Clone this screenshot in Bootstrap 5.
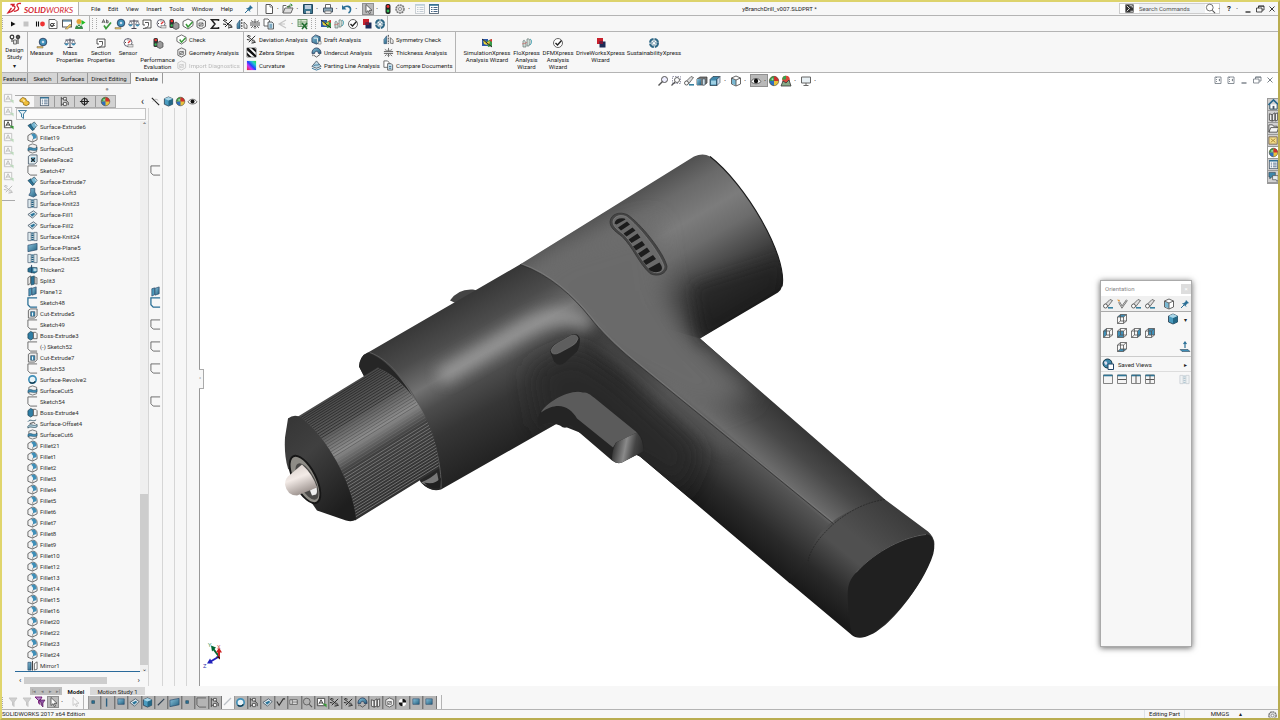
<!DOCTYPE html>
<html lang="en">
<head>
<meta charset="utf-8">
<meta name="viewport" content="width=device-width, initial-scale=1">
<title>yBranchDrill_v007.SLDPRT - SOLIDWORKS</title>
<link href="https://cdn.jsdelivr.net/npm/bootstrap@5.3.0/dist/css/bootstrap.min.css" rel="stylesheet">
<style>
:root{--ui:#f7f7f7;--line:#b4b4b4;--press:#b9b9b9}
body{height:100vh;overflow:hidden;background:var(--ui);border:2px solid #b9ad50;border-top-color:#ddd36c;border-left-color:#e0d56c;font:6px/7px Roboto,"Noto Sans",sans-serif;color:#222}
button,input{font:inherit;color:inherit;background:none;border:0;padding:0;border-radius:0}
a{color:inherit;text-decoration:none}
ul{list-style:none;margin:0;padding:0}
.ico{width:12px;height:12px;display:block;flex:none}
.ico.sm{width:11px;height:11px}
.cell{display:flex;align-items:center;justify-content:center;min-width:0}
.caret-dot{width:6px;flex:none;text-align:center;line-height:8px;font-size:8px}
.faint{opacity:.3}
.gap-s{margin-left:2px}
.vline{width:1px;align-self:stretch;background:var(--line);flex:none}
.grip{width:2px;height:11px;flex:none;background:repeating-linear-gradient(#aaa 0 1px,transparent 1px 2px);background-size:1px 2px;background-repeat:repeat-y}
.titlebar{height:14px;border-bottom:1px solid var(--line)}
.brand-box{width:76px;background:#fff}
.menu{width:164px;padding-left:12px;padding-right:10px}
.quick{width:98px}
.pressed{background:var(--press);box-shadow:inset 0 0 0 1px #909090}
.search{width:101px;height:11px;border:1px solid #ccc;background:#fff}
.search input{width:66px;background:#eff1f3;outline:0;height:9px}
.search input::placeholder{color:#555;opacity:1}
.macros{height:16px;border-bottom:1px solid var(--line)}
.ribbon{height:41px;border-bottom:1px solid var(--line)}
.big{display:flex;flex-direction:column;align-items:center;text-align:center;padding-top:5px;line-height:7px;white-space:nowrap}
.rows{display:flex;flex-direction:column;padding-top:1px}
.rows button{display:flex;align-items:center;height:13px;gap:2px;white-space:nowrap}
.rows .ico{width:11px;height:11px}
.dockpane{width:198px;border-right:1px solid #999;background:var(--ui)}
.tabs-cm{height:11px}
.tabs-cm button{background:#d5d5d5;border-right:1px solid #999;border-bottom:1px solid #aaa;text-align:center;white-space:nowrap}
.tabs-cm button.on{background:var(--ui);border-bottom-color:transparent;color:#000}
.strip{width:13px}
.strip ul{border-bottom:1px solid #aaa;padding:8px 0 4px}
.strip li{height:13px;display:flex;justify-content:center;align-items:center}
.fm-tabs{height:13px}
.fm-tabs .tabset{width:101px;border:1px solid #aaa;border-left:0}
.fm-tabs button{flex:1;border-right:1px solid #999;background:#d2d2d2}
.fm-tabs button.on{background:var(--ui);border-right:0}
.fm-tabs button:last-child{border-right:0}
.filterbox{height:12px;margin:0 2px 1px 1px;border:1px solid #c2c2c2;background:#fbfbfb}
.filterbox input{outline:0;width:80%}
.tree li{height:11px;display:flex;align-items:center;padding-left:12px;gap:2px;white-space:nowrap;color:#333}
.tree{border-bottom:1px solid #2a6a9a}
.vscroll{width:8px;background:#efefef}
.thumb{background:#cdcdcd}
.disp{width:51px}
.disp .cols{display:grid;grid-template-columns:14px 12px 12px 13px}
.disp .cols>*{border-left:1px solid #d6d6d6}
.disp .marks{padding-top:13px}
.disp .marks li{height:11px;display:flex;align-items:center;justify-content:center}
.viewport{background:#fff}
.viewport>.scene{position:absolute;inset:0;width:100%;height:100%}
.hud{position:absolute;top:1px;left:456px;height:13px}
.docctl{position:absolute;top:1px;right:2px;gap:1px}
.taskpane{position:absolute;right:0;top:25px;width:11px;border:1px solid #999;border-right:0}
.taskpane button{display:block;height:12px;width:10px;background:#d0d0d0;border-bottom:1px solid #999}
.taskpane button.on{background:#fff}
.knob{position:absolute;left:-1px;top:296px;width:5px;height:20px;border:1px solid #aaa;border-left:0;background:var(--ui);color:#777;line-height:18px}
.orient{position:absolute;right:86px;top:207px;width:92px;height:367px;background:var(--ui);border:1px solid #aaa;box-shadow:0 1px 6px rgba(0,0,0,.6)}
.orient .head{height:15px;background:#fff;color:#888}
.orient .head button{width:10px;height:10px;background:#ddd;color:#fff;line-height:8px}
.orient .tools{height:16px;background:#f0f0f0;border-bottom:1px solid #aaa}
.orient .faces{display:grid;grid-template-columns:repeat(4,14px) 1fr 12px;grid-auto-rows:14px;align-items:center}
.orient .saved{height:16px;border-top:1px solid #ccc;border-bottom:1px solid #ddd;margin-top:2px;padding-left:1px}
.orient .ports{gap:2px;padding:1px 1px 0}
.bottom{height:24px;border-bottom:1px solid var(--line);border-top:1px solid transparent;background:linear-gradient(var(--line),var(--line)) right -1px/calc(100% - 198px) 1px no-repeat border-box}
.sheets{height:8px;margin-left:14px}
.sheets button{white-space:nowrap}
.sheets .nav-sheet{width:8px;background:#bdbdbd;color:#777;font-size:5px}
.filters{height:14px}
.toggles{display:flex;background:#b4b4b4;height:13px}
.toggles button{flex:1;border-right:1px solid #777;box-shadow:inset 1px 0 #999}
.status{height:8px;line-height:8px;background:var(--ui)}
</style>
</head>
<body class="d-flex flex-column">

<svg width="0" height="0" class="position-absolute" aria-hidden="true">
<defs>
<linearGradient id="gb" x1="0" y1="0" x2="1" y2="1"><stop offset="0" stop-color="#8cc4de"/><stop offset="1" stop-color="#22607f"/></linearGradient>
<linearGradient id="rain" x1="0" y1="1" x2="1" y2="0"><stop offset="0" stop-color="#e22"/><stop offset=".3" stop-color="#c3e"/><stop offset=".5" stop-color="#24f"/><stop offset=".75" stop-color="#2cc"/><stop offset="1" stop-color="#3d3"/></linearGradient>
<symbol id="new" viewBox="0 0 12 12"><path d="M3 1.500h4.500l2 2V10.500H3z" fill="#fff" stroke="#555"/><path d="M7 1.500v2.500h2.500" fill="none" stroke="#555" stroke-width=".7"/></symbol>
<symbol id="open" viewBox="0 0 12 12"><path d="M1 10V2.500h3l1 1h3V5" fill="#fff" stroke="#666"/><path d="M1 10l2-5h8L9 10z" fill="#ddd" stroke="#666"/><path d="M6 5c0-3 2-3 4-3M8.500.800L10.300 2 8.800 3.500" fill="none" stroke="#3a8a3a"/></symbol>
<symbol id="save" viewBox="0 0 12 12"><path d="M1.500 1.500h9v9h-9z" fill="#3d7690" stroke="#23485c"/><path d="M3 2h6v4H3z" fill="#bcd"/><path d="M4 8h4v2.500H4z" fill="#ddd"/></symbol>
<symbol id="print" viewBox="0 0 12 12"><path d="M3.500 5V1.500h5V5" fill="#fff" stroke="#666"/><path d="M1.500 5h9v4h-9z" fill="#8ba6b6" stroke="#456"/><path d="M3 8h6v2.500H3z" fill="#eee" stroke="#666" stroke-width=".7"/></symbol>
<symbol id="undo" viewBox="0 0 12 12"><path d="M2 5C5 2 10 3 9.500 7c0 1.500-1 2.500-2 3" fill="none" stroke="#2a6f96" stroke-width="1.600"/><path d="M1 2v4.500h4.500z" fill="#2a6f96"/></symbol>
<symbol id="cursor" viewBox="0 0 12 12"><path d="M4 1.500v8l2-1.800 1.300 3 1.200-.6-1.300-2.800H10z" fill="#fff" stroke="#444" stroke-width=".8"/></symbol>
<symbol id="light" viewBox="0 0 12 12"><rect x="3.500" y="1" width="5" height="10" rx="2" fill="#222"/><circle cx="6" cy="3.500" r="1.400" fill="#e33"/><circle cx="6" cy="8" r="1.400" fill="#3b5"/></symbol>
<symbol id="gear" viewBox="0 0 12 12"><circle cx="6" cy="6" r="4" fill="#ddd" stroke="#777" stroke-width="1.500" stroke-dasharray="2 .6"/><circle cx="6" cy="6" r="1.500" fill="#fff" stroke="#777" stroke-width=".8"/></symbol>
<symbol id="list" viewBox="0 0 12 12"><rect x="1.500" y="1.500" width="9" height="9" fill="#fff" stroke="#567" stroke-width=".9"/><path d="M1.500 2h9" stroke="#2a6f96" stroke-width="1.500"/><path d="M3 4.500h1.500M3 6.500h1.500M3 8.500h1.500M5.500 4.500h4M5.500 6.500h4M5.500 8.500h4" stroke="#357" stroke-width=".9"/></symbol>
<symbol id="play" viewBox="0 0 12 12"><path d="M4 3.500v5L8.500 6z" fill="#111"/></symbol>
<symbol id="stop" viewBox="0 0 12 12"><path d="M3.500 3.500h5v5h-5z" fill="#c4c4c4"/></symbol>
<symbol id="rec" viewBox="0 0 12 12"><path d="M2.500 3.500v5M4.500 3.500v5" stroke="#111" stroke-width="1.100"/><circle cx="8.500" cy="6" r="2.400" fill="#e33"/></symbol>
<symbol id="script" viewBox="0 0 12 12"><path d="M2 1.500h6l2 2v7H2z" fill="#fff" stroke="#555" stroke-width=".9"/><path d="M4 5.500h4M4 7.500h4" stroke="#777"/><circle cx="5" cy="7" r="1.600" fill="none" stroke="#444"/></symbol>
<symbol id="macro" viewBox="0 0 12 12"><rect x="1.500" y="2" width="9" height="7" fill="#fff" stroke="#555"/><path d="M2 3h8" stroke="#2a6f96"/><path d="M4 11l5-5 1.500 1.500-4 3.500z" fill="#e6c45c" stroke="#765" stroke-width=".5"/></symbol>
<symbol id="run" viewBox="0 0 12 12"><circle cx="5" cy="3.500" r="2.500" fill="#e2a33a"/><path d="M1 11c0-6 8-6 8 0z" fill="#3b8a4a"/><path d="M7.500 2l4 2.500-4 2.500z" fill="#2b2"/><path d="M3 7l2 2 2-2" stroke="#fff" fill="none" stroke-width=".7"/></symbol>
<symbol id="spell" viewBox="0 0 12 12"><path d="M1 5l1.500-3.500L4 5M1.600 4h1.800M5.500 1.500v3.300h1.600v-2H5.500" fill="none" stroke="#444" stroke-width=".8"/><path d="M3 7.500l2 3 5-6" fill="none" stroke="#3a9a3a" stroke-width="1.700"/></symbol>
<symbol id="measure" viewBox="0 0 12 12"><circle cx="7" cy="5" r="3.800" fill="#3f8fb8" stroke="#235" stroke-width=".8"/><circle cx="7" cy="5" r="1.300" fill="#cde"/><path d="M1 9.500h6v1.500H1z" fill="#e6c45c" stroke="#765" stroke-width=".5"/></symbol>
<symbol id="scale" viewBox="0 0 12 12"><path d="M6 1.500v8.500M3.500 10.500h5M1.500 3h9" stroke="#445" fill="none"/><path d="M.500 6.500h4L2.500 3zM7.500 6.500h4L9.500 3z" fill="#fff" stroke="#445" stroke-width=".6"/><path d="M.500 6.500h4c-.5 2.500-3.500 2.500-4 0M7.500 6.500h4c-.5 2.500-3.500 2.500-4 0" fill="#3f8fb8"/></symbol>
<symbol id="section" viewBox="0 0 12 12"><path d="M2 2h8v8H4" fill="#fff" stroke="#444" stroke-width=".9"/><path d="M2 2v5h2M4 4.500h3.500v3C7 9.500 5 10.500 2 10.500" fill="none" stroke="#444" stroke-width=".9"/></symbol>
<symbol id="sensor" viewBox="0 0 12 12"><circle cx="6" cy="5.500" r="4" fill="#fff" stroke="#556" stroke-width=".9"/><path d="M6 6l2.500-2.500" stroke="#d33" stroke-width="1.200"/><path d="M6 2.500v1M3 5.500h1" stroke="#444"/><rect x="6" y="7.500" width="5" height="2.500" fill="#ddd" stroke="#666" stroke-width=".5"/></symbol>
<symbol id="perf" viewBox="0 0 12 12"><rect x="1.500" y="1" width="4.500" height="9" rx="1.500" fill="#333"/><circle cx="3.800" cy="3" r="1.300" fill="#e33"/><circle cx="3.800" cy="7.500" r="1.300" fill="#3b5"/><path d="M5 6l3-2 3 2v4l-3 1.500L5 10z" fill="#999" stroke="#444" stroke-width=".7"/></symbol>
<symbol id="chk" viewBox="0 0 12 12"><path d="M1 3.500L6 1l5 2.500v4L6 11 1 8z" fill="#fff" stroke="#555" stroke-width=".9"/><path d="M4 6l2 3 4.500-5" fill="none" stroke="#3a9a3a" stroke-width="1.500"/></symbol>
<symbol id="geom" viewBox="0 0 12 12"><path d="M2 3l4-2 4.500 2v5.500L6 11 2 9z" fill="#eee" stroke="#555" stroke-width=".9"/><path d="M4 5h4v3H4zM4 8l4-3" fill="none" stroke="#555" stroke-width=".8"/></symbol>
<symbol id="sigma" viewBox="0 0 12 12"><path d="M9.500 3V1.800h-7L6 6l-3.500 4.200h7V9" fill="none" stroke="#222" stroke-width="1.500"/></symbol>
<symbol id="dev" viewBox="0 0 12 12"><path d="M1 2l9 7M2 1.500l3 1M3 9l7-7M6 10l4.500-1M1 6l3 .5" stroke="#222" stroke-width="1"/><circle cx="8" cy="8" r="1.500" fill="none" stroke="#555" stroke-width=".8"/></symbol>
<symbol id="sym" viewBox="0 0 12 12"><path d="M1 10.500V6l3-4v8.500z" fill="url(#gb)" stroke="#246" stroke-width=".6"/><path d="M5.800 1v10" stroke="#333" stroke-dasharray="2 1"/><path d="M8 10V4l3 3v3.500z" fill="#eee" stroke="#555" stroke-width=".8"/></symbol>
<symbol id="thick" viewBox="0 0 12 12"><path d="M1 5h10M1 7h10" stroke="#555" stroke-width="1"/><path d="M6 1v3M6 11V8M4.500 3L6 4.500 7.500 3M4.500 9.500L6 8l1.500 1.500M2 2.500l2 1.500M10 2.500L8 4M2 10l2-2M10 10L8 8" fill="none" stroke="#333" stroke-width=".7"/></symbol>
<symbol id="comp" viewBox="0 0 12 12"><path d="M1 1h4l1.500 1.500V8H1z" fill="#fff" stroke="#444" stroke-width=".8"/><path d="M5 4h4l1.500 1.500V11H5z" fill="#cfe2ec" stroke="#444" stroke-width=".8"/><path d="M6.500 7h2.500M6.500 9h2.500" stroke="#2a6f96"/></symbol>
<symbol id="share" viewBox="0 0 12 12"><path d="M10 2L3 6l7 4M3 6h6" fill="none" stroke="#555" stroke-width="1.200"/></symbol>
<symbol id="xls" viewBox="0 0 12 12"><rect x="1" y="1.500" width="9" height="7" fill="#dfe8d8" stroke="#585" stroke-width=".8"/><path d="M1 4h9M1 6.200h9M4 2v6" stroke="#696" stroke-width=".7"/><path d="M5 5l5 6M10 5l-5 6" stroke="#1d6b2d" stroke-width="1.500"/></symbol>
<symbol id="simx" viewBox="0 0 12 12"><path d="M1 2h6v7H1z" fill="#2a58a8"/><path d="M2 3l3 1 1 4-3-1z" fill="#e6d83c"/><path d="M6 4l5-2v7l-4 1z" fill="#3a9a4a"/><path d="M4 6l5-2-1 4z" fill="#e6c83c"/><path d="M8 3l3-1v3z" fill="#d33"/><path d="M1 2l10 8" stroke="#222"/></symbol>
<symbol id="flox" viewBox="0 0 12 12"><path d="M2 4c2-3 3 3 3 6H2zM6 2c3-1 4 2 2 7H6z" fill="#cfdcd4" stroke="#677" stroke-width=".7"/><path d="M9 2c2 1 2 4 0 6" fill="none" stroke="#39a"/><path d="M1 7c2-1 4 0 5-2" stroke="#c66" fill="none" stroke-width=".7"/></symbol>
<symbol id="dfmx" viewBox="0 0 12 12"><circle cx="6" cy="6" r="4.500" fill="#fff" stroke="#666"/><path d="M3.500 6l2 2 4-4.500" fill="none" stroke="#222" stroke-width="1.400"/></symbol>
<symbol id="drvx" viewBox="0 0 12 12"><path d="M2 1h6v6H2z" fill="#c8202c"/><path d="M4.500 4.500h6v6h-6z" fill="#1c2c58"/><path d="M4.500 4.500H8V7H4.500z" fill="#7a1838"/></symbol>
<symbol id="sust" viewBox="0 0 12 12"><circle cx="6" cy="6" r="4" fill="none" stroke="#2e6785" stroke-width="2" stroke-dasharray="5.300 1"/><path d="M6 3.500l1 2 2 .5-2 1-1 2-1-2-2-1 2-.5z" fill="#fff" stroke="#2e6785" stroke-width=".5"/></symbol>
<symbol id="study" viewBox="0 0 12 12"><circle cx="3" cy="3" r="1.800" fill="none" stroke="#333" stroke-width="1.200"/><circle cx="9" cy="3" r="1.800" fill="#555" stroke="#333"/><path d="M3 5v3M9 5v5" stroke="#333"/><path d="M4.500 6h3v4h-3z" stroke="#555" stroke-width=".8" fill="#ddd"/></symbol>
<symbol id="zebra" viewBox="0 0 12 12"><path d="M1 1h10v10H1z" fill="#fff"/><path d="M1 1h2l8 8v2H9.500L1 3.500zM5.500 1H9l2 2v3zM1 6l5 5H3L1 9z" fill="#111"/><path d="M1 1h10v10H1z" fill="none" stroke="#333" stroke-width=".6"/></symbol>
<symbol id="curv" viewBox="0 0 12 12"><path d="M1 1h10v10H1z" fill="url(#rain)"/></symbol>
<symbol id="draft" viewBox="0 0 12 12"><path d="M1 4l4-3 5 2v6l-4 2-5-2z" fill="url(#gb)" stroke="#235" stroke-width=".8"/><path d="M3 4.500h4v5" stroke="#fff" fill="none"/><path d="M8 8h3v3H8z" fill="#eee" stroke="#555" stroke-width=".5"/></symbol>
<symbol id="under" viewBox="0 0 12 12"><path d="M1 7c0-8 10-8 10 0H8c0-3-4-3-4 0z" fill="url(#gb)" stroke="#235" stroke-width=".8"/><path d="M3 9l3 2 4-3M2 8v2" stroke="#555" fill="none"/></symbol>
<symbol id="partl" viewBox="0 0 12 12"><path d="M1 7l5-6 5 6-5 2z" fill="#bfd8e4" stroke="#345" stroke-width=".8"/><path d="M1 9l5 2 5-2M3 6c2-1 4 0 6-1" fill="none" stroke="#2a6f96"/></symbol>
<symbol id="pin" viewBox="0 0 12 12"><path d="M7 2l3 3-2 .8L6.500 8 4 5.500 6.300 4z" fill="#2a6f96"/><path d="M5 7l-3 3M3.500 5L7 8.500" stroke="#2a6f96"/></symbol>
<symbol id="glass" viewBox="0 0 12 12"><circle cx="5.200" cy="5" r="3.700" fill="none" stroke="#555" stroke-width=".9"/><path d="M8 8l3 3" stroke="#555" stroke-width="1.200"/></symbol>
<symbol id="cmd" viewBox="0 0 12 12"><path d="M1.500 1.500h9v9h-9z" fill="#333"/><path d="M3 3l3 3-3 3M7 9h3M6 3h3v2" stroke="#fff" fill="none" stroke-width=".9"/></symbol>
<symbol id="min" viewBox="0 0 12 12"><path d="M3.500 9h5" stroke="currentColor" stroke-width="1.300"/></symbol>
<symbol id="rest" viewBox="0 0 12 12"><path d="M2.500 5h5.500v4H2.500zM4.500 5V3H10v4H8M4.500 3.200h5.500" fill="none" stroke="currentColor" stroke-width=".8"/></symbol>
<symbol id="x" viewBox="0 0 12 12"><path d="M3.500 3.500l5 5M8.500 3.500l-5 5" stroke="currentColor" stroke-width=".9"/></symbol>
<symbol id="dock" viewBox="0 0 12 12"><path d="M3 3h6v6.500H3z" fill="none" stroke="currentColor" stroke-width=".8"/><path d="M4.500 3v6" stroke="currentColor" stroke-dasharray="1 1" stroke-width=".8"/><path d="M8 4.500L6.500 6 8 7.500z" fill="currentColor"/></symbol>
<symbol id="zfit" viewBox="0 0 12 12"><circle cx="7.500" cy="4.500" r="3" fill="#eef" stroke="#555" stroke-width="1"/><path d="M5.500 6.500L1.500 10.500" stroke="#555" stroke-width="1.500"/></symbol>
<symbol id="zarea" viewBox="0 0 12 12"><path d="M2.500 1.500h8v7h-8z" fill="none" stroke="#99a" stroke-dasharray="1.500 1"/><circle cx="7" cy="5" r="2.500" fill="#fff" stroke="#555" stroke-width=".9"/><path d="M5 7l-3.500 3.500" stroke="#555" stroke-width="1.300"/></symbol>
<symbol id="orig" viewBox="0 0 12 12"><path d="M3 6.500l5-5 2.500 1-5 6.500z" fill="#ddd" stroke="#555" stroke-width=".8"/><path d="M6 9.800h5" stroke="#36809f" stroke-width="1.600"/><circle cx="3.500" cy="8" r="2" fill="#fff" stroke="#555" stroke-width=".9"/></symbol>
<symbol id="orign" viewBox="0 0 12 12"><path d="M3 4l3 5 5-7" fill="none" stroke="#666" stroke-width="2"/><path d="M3 4l3 5 5-7" fill="none" stroke="#ddd" stroke-width=".7"/><path d="M1 1.500l3 .5-1 2z" fill="#e0963a"/></symbol>
<symbol id="secv" viewBox="0 0 12 12"><path d="M1 4l3-2h7v6l-3 2H1z" fill="#777" stroke="#333" stroke-width=".7"/><path d="M1 4h4v6H1z" fill="url(#gb)"/><path d="M6.500 4H9v6H6.500z" fill="#cfe0e8" stroke="#345" stroke-width=".5"/></symbol>
<symbol id="cubev" viewBox="0 0 12 12"><path d="M1 4.500l3-3h7l-3 3v6H1z" fill="#3f88ab" stroke="#234" stroke-width=".7"/><path d="M2 5.500h5v4H2z" fill="#9fd0e4"/><path d="M8 4.500l3-3v6l-3 3z" fill="#cde" stroke="#345" stroke-width=".6"/></symbol>
<symbol id="cube" viewBox="0 0 12 12"><path d="M1.500 3L6 1l4.500 2v6L6 11 1.500 9z" fill="#4a9cc0" stroke="#234" stroke-width=".8"/><path d="M6 5v6l4.500-2V3z" fill="#246886"/><path d="M1.500 3L6 5l4.500-2L6 1z" fill="#a9d6e8"/></symbol>
<symbol id="cubew" viewBox="0 0 12 12"><path d="M1.500 3L6 1l4.500 2v6L6 11 1.500 9z" fill="#fff" stroke="#555" stroke-width=".9"/><path d="M2 3.500l4 1.700v5.300L2 8.800z" fill="#7ab8d2"/><path d="M6 5v6M1.500 3L6 5l4.500-2" fill="none" stroke="#555" stroke-width=".9"/></symbol>
<symbol id="eye" viewBox="0 0 12 12"><path d="M1 6.500c2.500-4 7.500-4 10 0-2.500 3-7.500 3-10 0z" fill="#fff" stroke="#444" stroke-width=".8"/><circle cx="6" cy="6" r="2.200" fill="#111"/></symbol>
<symbol id="ball" viewBox="0 0 12 12"><circle cx="6" cy="6" r="4.700" fill="#e8c23a"/><path d="M6 6V1.300A4.700 4.700 0 0 0 1.300 6z" fill="#3aa04a"/><path d="M6 6V1.300A4.700 4.700 0 0 1 10.700 6z" fill="#d22f2f"/><path d="M6 6H1.300A4.700 4.700 0 0 0 6 10.700z" fill="#2e6fc0"/><circle cx="6" cy="6" r="4.700" fill="none" stroke="#444" stroke-width=".6"/><circle cx="4.500" cy="4.300" r="1" fill="#fff" opacity=".6"/></symbol>
<symbol id="scn" viewBox="0 0 12 12"><circle cx="6" cy="4.500" r="3.800" fill="#d8483a"/><path d="M6 4.500V.700a3.800 3.800 0 0 0-3.800 3.800z" fill="#3aa04a"/><path d="M1 11l2-5 3 2 3-3 2 6z" fill="#8a8" stroke="#333" stroke-width=".8"/></symbol>
<symbol id="mon" viewBox="0 0 12 12"><path d="M1.500 2h9v6h-9z" fill="#e8f0f4" stroke="#666"/><path d="M6 8v2M3.500 10.500h5" stroke="#666"/></symbol>
<symbol id="extr" viewBox="0 0 12 12"><path d="M1 5l5 5.500 2-1.500-4-6z" fill="#2b7499" stroke="#134" stroke-width=".6"/><path d="M4 4l4-3 3 4-3.500 4z" fill="#76b7d3" stroke="#134" stroke-width=".6"/><path d="M8.500 3.500l2 2" stroke="#fff"/></symbol>
<symbol id="fillet" viewBox="0 0 12 12"><path d="M1 4l4.500-2.800C9 1 11 3 11 6v2.500L6 11 1 9z" fill="#f2f2f2" stroke="#555" stroke-width=".9"/><path d="M4.500 3c3-3 6 0 6 3.500L6.500 8C7 5 6 4 4.500 3z" fill="#3f8fb8"/><path d="M6.300 7.500V11" stroke="#666" stroke-width=".7"/></symbol>
<symbol id="scut" viewBox="0 0 12 12"><path d="M2 2.500L6 1l4.500 1.500v7L6 11 2 9.500z" fill="#f0f0f0" stroke="#555" stroke-width=".8"/><path d="M1 6c3-3 6 2 10-1.500v2.800C7 10 4 6 1 8.500z" fill="#3f8fb8" stroke="#134" stroke-width=".5"/></symbol>
<symbol id="delf" viewBox="0 0 12 12"><path d="M1.500 2.500L4 1h7v7.500L8.500 11h-7z" fill="#e4eef2" stroke="#345" stroke-width=".8"/><path d="M4.500 3.500H9v5H4.500z" fill="#5aa0c0"/><path d="M4.500 4.500l4 4M8.500 4.500l-4 4" stroke="#222" stroke-width="1.100"/></symbol>
<symbol id="sk" viewBox="0 0 12 12"><path d="M11 1H1v7.500L3.500 11H11" fill="none" stroke="#555" stroke-width=".9"/></symbol>
<symbol id="skb" viewBox="0 0 12 12"><path d="M11 1H1v7.500L3.500 11H11" fill="none" stroke="#2a6f96" stroke-width="1.400"/></symbol>
<symbol id="loft" viewBox="0 0 12 12"><path d="M4 1.500h4.500v4l2 3.500L7 11 2 9l2-3.500z" fill="url(#gb)" stroke="#246" stroke-width=".7"/></symbol>
<symbol id="knit" viewBox="0 0 12 12"><path d="M1 1.500h3.500v9H1zM7.500 1.500H11v9H7.500z" fill="#dde9ee" stroke="#567" stroke-width=".8"/><path d="M6 1.500v9" stroke="#1d5d80" stroke-width="2.500" stroke-dasharray="1.600 .8"/></symbol>
<symbol id="fill" viewBox="0 0 12 12"><path d="M1 6l6-4 4 3-5 5z" fill="#e3edf1" stroke="#345" stroke-width=".8"/><path d="M3.500 6l4-2 1.500 1.500-3.500 3z" fill="#2b7499"/></symbol>
<symbol id="surfp" viewBox="0 0 12 12"><path d="M1 3.500l10-2v7l-10 2z" fill="url(#gb)" stroke="#246" stroke-width=".7"/></symbol>
<symbol id="thk" viewBox="0 0 12 12"><path d="M1 5l3-1.500 7 .5v4.500L8 10 1 8.500z" fill="#2b7499" stroke="#134" stroke-width=".6"/><path d="M5 1v9" stroke="#246"/><path d="M7 4.500l3.500.5v3L7 8z" fill="#bcd9e5"/></symbol>
<symbol id="split" viewBox="0 0 12 12"><path d="M1 3l3-2v8l-3 2z" fill="#e8e8e8" stroke="#444" stroke-width=".8"/><path d="M4.500 2L8 1v9l-3.500 1z" fill="#2b7499" stroke="#134" stroke-width=".6"/><path d="M8.500 2L11 3v7l-2.500-.5z" fill="#ccc" stroke="#444" stroke-width=".6"/></symbol>
<symbol id="plane" viewBox="0 0 12 12"><path d="M2 3l3-1v7.500l-3 1.500z" fill="#4d9bbd" stroke="#246" stroke-width=".7"/><path d="M5.500 2.500L10 1v7.500L5.500 10z" fill="url(#gb)" stroke="#246" stroke-width=".7"/></symbol>
<symbol id="cute" viewBox="0 0 12 12"><path d="M1.500 2.500L4 1h7v7.500L8.500 11h-7z" fill="#eee" stroke="#555" stroke-width=".9"/><path d="M4 4h4.500v5H4z" fill="#3f8fb8" stroke="#234" stroke-width=".6"/><path d="M6 5v3.500" stroke="#fff"/></symbol>
<symbol id="boss" viewBox="0 0 12 12"><path d="M1 4l3-2.500L7 3v6l-3 2-3-2z" fill="#2f7ea5" stroke="#134" stroke-width=".7"/><path d="M7 2.500h2.500L11 4v5.500H7z" fill="#f2f2f2" stroke="#555" stroke-width=".9"/></symbol>
<symbol id="rev" viewBox="0 0 12 12"><circle cx="6" cy="6" r="4" fill="#e8f3f7" stroke="#3f8fb8" stroke-width="1.800"/><path d="M9 8a4 4 0 0 1-6 1" fill="none" stroke="#134" stroke-width="1.500"/></symbol>
<symbol id="offs" viewBox="0 0 12 12"><path d="M1 4c3-4 5 1 9-2M1 9c3-4 6 1 10-2v2.500C7 12 4 8 1 11z" fill="#bcd9e5" stroke="#356" stroke-width=".9"/><path d="M3 6l4-1 2 1" stroke="#333" fill="none"/></symbol>
<symbol id="mirr" viewBox="0 0 12 12"><path d="M1 2.500h3.500V11H1z" fill="url(#gb)" stroke="#246" stroke-width=".7"/><path d="M6 1v10.500" stroke="#333"/><path d="M8 4l3-2v8l-3 1z" fill="#fff" stroke="#555" stroke-width=".9"/></symbol>
<symbol id="part" viewBox="0 0 12 12"><path d="M1 4l3-2.500L7.500 3 8 5l3 1.500V9L8 10.500l-3-1L4.500 7 1 6z" fill="#f0bf3a" stroke="#7d5c10" stroke-width=".8"/><path d="M4 4l2 1-1 1.500" stroke="#fff" fill="none" stroke-width=".8"/></symbol>
<symbol id="conf" viewBox="0 0 12 12"><path d="M2.500 1v10M2.500 3H5M2.500 9H5" stroke="#444" fill="none"/><path d="M5 1.500h3v3H5zM5 7h3v3.500H5z" fill="#fff" stroke="#444" stroke-width=".9"/><path d="M7 4l3 3v3" stroke="#333" fill="none"/></symbol>
<symbol id="targ" viewBox="0 0 12 12"><circle cx="6" cy="6" r="3.200" fill="none" stroke="#222" stroke-width="1.100"/><path d="M6 1.500v9M1 6h10" stroke="#222" stroke-width="1.100"/></symbol>
<symbol id="funnel" viewBox="0 0 12 12"><path d="M1.500 2.500h8L6.500 6v4.500L4.500 9V6z" fill="#e8f2f6" stroke="#2a6f96" stroke-width=".9"/></symbol>
<symbol id="fun2" viewBox="0 0 12 12"><path d="M2 2h8L7 6v4.500L5.500 9V6z" fill="#777" stroke="#555"/></symbol>
<symbol id="fun3" viewBox="0 0 12 12"><path d="M1 1h7L6 4.500v4L4.500 7V4.500z" fill="#b68ac8" stroke="#606" stroke-width=".8"/><path d="M5 4h6L9 7v4L7.500 9.500V7z" fill="#8f55a8" stroke="#404" stroke-width=".6"/></symbol>
<symbol id="note" viewBox="0 0 12 12"><path d="M1.500 1.500h8v8h-8z" fill="#fff" stroke="#444"/><path d="M3 8l2.500-5L8 8M4 6.500h3" fill="none" stroke="#333"/><path d="M7 7l4.500 4.500v-4z" fill="#3a9a3a"/></symbol>
<symbol id="home" viewBox="0 0 12 12"><path d="M2 6v5h8V6" fill="#fff" stroke="#245"/><path d="M.500 6.500L6 1l5.500 5.500" fill="none" stroke="#24658a" stroke-width="1.700"/><path d="M5 7.500h2V11H5z" fill="#456"/></symbol>
<symbol id="books" viewBox="0 0 12 12"><path d="M1.500 3l3 1v7l-3-1zM4.500 4l3-2v8l-3 1zM8 3l2.500-1v8L8 11z" fill="#eee" stroke="#444" stroke-width=".9"/></symbol>
<symbol id="fold" viewBox="0 0 12 12"><path d="M1 10V2h4l1 1.500h4V5M1 10l2-5h8.500L10 10z" fill="#f4f4f4" stroke="#444" stroke-width=".9"/></symbol>
<symbol id="pal" viewBox="0 0 12 12"><path d="M1 2h9v8H1z" fill="#f3dc8a" stroke="#765"/><path d="M3 4l5 4M8 4L3 8" stroke="#a83"/></symbol>
<symbol id="chat" viewBox="0 0 12 12"><path d="M1 1.500h7v5H4L2 8.500v-2H1z" fill="#3f88ab" stroke="#234" stroke-width=".6"/><path d="M5 5h6v4.500l-1 2-1-2H5z" fill="#e8eef2" stroke="#444" stroke-width=".7"/></symbol>
<symbol id="wire" viewBox="0 0 12 12"><path d="M1.500 4h6v6.500h-6zM4.500 1.500h6V8h-6zM1.500 4l3-2.500M7.500 4l3-2.500M1.500 10.500l3-2.500M7.500 10.500l3-2.500" fill="none" stroke="#555" stroke-width=".8"/></symbol>
<symbol id="pt" viewBox="0 0 12 12"><path d="M3 4h3v3H3z" fill="#2b7499" stroke="#134" stroke-width=".5"/></symbol>
<symbol id="ln" viewBox="0 0 12 12"><path d="M2 9l7-7" stroke="#345" stroke-width="1.200"/></symbol>
<symbol id="hid" viewBox="0 0 12 12"><path d="M2 2l8 8" stroke="#222" stroke-width="1.200"/><path d="M3 6c2-3 4-3 6-1" stroke="#aaa" fill="none"/></symbol>
<symbol id="vl" viewBox="0 0 12 12"><path d="M5 1.500v9" stroke="#2b5f80" stroke-width="1.500"/></symbol>
<symbol id="sf" viewBox="0 0 12 12"><path d="M2 2h7v6H2z" fill="url(#gb)" stroke="#246" stroke-width=".6"/></symbol>
<symbol id="ck" viewBox="0 0 12 12"><path d="M2 5l2.500 4L9 2h2" fill="none" stroke="#333" stroke-width="1.200"/></symbol>
<symbol id="dt" viewBox="0 0 12 12"><circle cx="6" cy="6" r="4" fill="#fff"/><path d="M6 6V2a4 4 0 0 1 4 4zM6 6v4a4 4 0 0 1-4-4z" fill="#111"/></symbol>
<symbol id="box" viewBox="0 0 12 12"><path d="M1 3h8v5H1z" fill="#eee" stroke="#444" stroke-width=".8"/><path d="M3.500 3v5M3.500 5.500H9" stroke="#444" stroke-width=".8"/></symbol>
<symbol id="norm" viewBox="0 0 12 12"><path d="M6 1v6M4.500 3L6 1l1.500 2" stroke="#2a6f96" fill="none" stroke-width="1.200"/><path d="M1 8.500h8l2 2H3z" fill="#3f8fb8" stroke="#234" stroke-width=".5"/></symbol>
<symbol id="world" viewBox="0 0 12 12"><circle cx="5.500" cy="5.500" r="4.500" fill="#3f88ab" stroke="#134"/><path d="M2 4c2-2 4 0 3 2S3 7 2 4z" fill="#dde"/><path d="M6 6h5.500v5.500H6z" fill="#fff" stroke="#246"/></symbol>
<symbol id="v1" viewBox="0 0 12 12"><path d="M1.500 2h9v8.500h-9z" fill="#f4f4f4" stroke="#666" stroke-width=".8"/><path d="M1.500 2.500h9" stroke="#2e7596" stroke-width="1.600"/></symbol>
</defs>
</svg>

<header class="titlebar d-flex align-items-center">
  <div class="brand-box d-flex align-self-stretch">
    <svg viewBox="0 0 76 13" width="76" height="13" role="img" aria-label="SOLIDWORKS">
      <path d="M8.500 2.500h3.500l-.7 1.200M10 4c3-.5 4 1 2 3.500S7.500 10.500 6 10.800L9.500 6M19 1.500c-3-.5-5 1-3.500 2.800s2 3.500-1.500 4.700c-1.500.5-2 0-2 0" fill="none" stroke="#d3222c" stroke-width="1.300"/>
      <text x="22" y="11" font-family="Lato" font-size="8" font-style="italic" fill="#d3222c"><tspan font-weight="bold">SOLID</tspan>WORKS</text>
    </svg>
  </div>
  <div class="vline"></div>
  <nav class="menu d-flex justify-content-between" aria-label="Main menu"><a href="#">File</a><a href="#">Edit</a><a href="#">View</a><a href="#">Insert</a><a href="#">Tools</a><a href="#">Window</a><a href="#">Help</a></nav>
  <button aria-label="Pin menu"><svg class="ico"><use href="#pin"/></svg></button>
  <div class="vline gap-s"></div>
  <div class="quick d-flex ms-1 align-items-center" id="quick"></div>
  <button class="pressed gap-s" aria-label="Select"><svg class="ico"><use href="#cursor"/></svg></button><span class="caret-dot">·</span>
  <div class="d-flex align-items-center gap-s" id="quick2"></div>
  <div class="flex-fill text-center">yBranchDrill_v007.SLDPRT *</div>
  <div class="search d-flex align-items-center"><svg class="ico sm mx-1"><use href="#cmd"/></svg><input type="text" placeholder="Search Commands" aria-label="Search Commands"><svg class="ico sm"><use href="#glass"/></svg><span class="caret-dot">·</span></div>
  <div class="d-flex align-items-center ms-1" id="winctl"></div>
</header>

<div class="macros d-flex align-items-center" id="macros"></div>

<div class="ribbon d-flex" id="ribbon"></div>

<main class="d-flex flex-fill" style="min-height:0">
  <aside class="dockpane d-flex flex-column flex-shrink-0">
    <div class="tabs-cm d-flex" role="tablist">
      <button role="tab" style="width:26px">Features</button><button role="tab" style="width:30px">Sketch</button><button role="tab" style="width:30px">Surfaces</button><button role="tab" style="width:43px">Direct Editing</button><button role="tab" class="on" style="width:32px">Evaluate</button>
    </div>
    <div class="d-flex flex-fill" style="min-height:0">
      <div class="strip"><ul id="strip"></ul></div>
      <div class="flex-fill d-flex flex-column position-relative">
        <div class="text-center" style="height:11px;line-height:10px;color:#999">●</div>
        <div class="d-flex flex-fill" style="min-height:0">
          <div class="d-flex flex-column flex-fill" style="min-width:0">
            <div class="fm-tabs d-flex justify-content-between align-items-center"><div class="tabset d-flex align-self-stretch" id="fmtabs"></div><span class="pe-1" style="font-size:10px">‹</span></div>
            <div class="filterbox d-flex align-items-center"><label for="flt" aria-label="Filter tree"><svg class="ico"><use href="#funnel"/></svg></label><input id="flt" type="text"></div>
            <div class="d-flex">
              <ul class="tree flex-fill" id="tree"></ul>
              <div class="vscroll d-flex flex-column text-center"><span>⌃</span><div class="flex-fill"></div><div class="thumb" style="height:31%"></div><span>⌄</span></div>
            </div>
            <div class="d-flex align-items-center justify-content-between ps-1 mt-1 pe-2" style="height:8px;gap:3px"><span style="font-size:8px">‹</span><div class="thumb" style="width:68%;height:7px"></div><div class="flex-fill"></div><span style="font-size:8px">›</span></div>
          </div>
          <div class="disp d-flex flex-column">
            <div class="cols" style="height:13px" id="dhead"></div>
            <div class="cols flex-fill"><ul class="marks" id="marks"></ul><i></i><i></i><i></i></div>
          </div>
        </div>
      </div>
    </div>
  </aside>

  <section class="viewport flex-fill position-relative" aria-label="Graphics area">
    <svg class="scene" viewBox="200 73 1078 612" role="img" aria-label="Drill model">
      <defs>
        <linearGradient id="front" gradientUnits="userSpaceOnUse" x1="440" y1="311" x2="515" y2="445"><stop offset="0" stop-color="#383838"/><stop offset=".2" stop-color="#4c4c4c"/><stop offset=".38" stop-color="#727272"/><stop offset=".52" stop-color="#4c4c4c"/><stop offset=".7" stop-color="#363636"/><stop offset="1" stop-color="#232323"/></linearGradient>
        <linearGradient id="rear" gradientUnits="userSpaceOnUse" x1="660" y1="176" x2="737" y2="310"><stop offset="0" stop-color="#515151"/><stop offset=".15" stop-color="#6a6a6a"/><stop offset=".34" stop-color="#7c7c7c"/><stop offset=".5" stop-color="#6c6c6c"/><stop offset=".75" stop-color="#3d3d3d"/><stop offset="1" stop-color="#1b1b1b"/></linearGradient>
        <linearGradient id="hand" gradientUnits="userSpaceOnUse" x1="790" y1="413" x2="706" y2="512"><stop offset="0" stop-color="#343434"/><stop offset=".2" stop-color="#484848"/><stop offset=".42" stop-color="#6c6c6c"/><stop offset=".46" stop-color="#555"/><stop offset=".8" stop-color="#2a2a2a"/><stop offset="1" stop-color="#191919"/></linearGradient>
        <linearGradient id="fade" gradientUnits="userSpaceOnUse" x1="600" y1="350" x2="662" y2="400"><stop offset="0" stop-color="#000"/><stop offset="1" stop-color="#fff"/></linearGradient>
        <mask id="join" maskUnits="userSpaceOnUse" x="200" y="73" width="1078" height="612"><path d="M200 73h1078v612H200z" fill="url(#fade)"/></mask>
        <linearGradient id="capg" gradientUnits="userSpaceOnUse" x1="908" y1="513" x2="828" y2="612"><stop offset="0" stop-color="#3a3a3a"/><stop offset=".4" stop-color="#505050"/><stop offset=".55" stop-color="#505050"/><stop offset=".8" stop-color="#2a2a2a"/><stop offset="1" stop-color="#191919"/></linearGradient>
        <linearGradient id="chuck" gradientUnits="userSpaceOnUse" x1="333" y1="392" x2="397" y2="496"><stop offset="0" stop-color="#484848"/><stop offset=".25" stop-color="#5a5a5a"/><stop offset=".44" stop-color="#8c8c8c"/><stop offset=".6" stop-color="#404040"/><stop offset="1" stop-color="#303030"/></linearGradient>
        <linearGradient id="cone" x1="0" y1="0" x2=".6" y2="1"><stop offset="0" stop-color="#353535"/><stop offset=".4" stop-color="#404040"/><stop offset="1" stop-color="#1e1e1e"/></linearGradient>
        <linearGradient id="bit" x1=".3" y1="0" x2=".7" y2="1"><stop offset="0" stop-color="#d8cfca"/><stop offset=".4" stop-color="#f3ebe7"/><stop offset="1" stop-color="#8c827e"/></linearGradient>
        <linearGradient id="trg" gradientUnits="userSpaceOnUse" x1="613" y1="446" x2="643" y2="452"><stop offset="0" stop-color="#333"/><stop offset=".4" stop-color="#8a8a8a"/><stop offset=".7" stop-color="#444"/><stop offset="1" stop-color="#2c2c2c"/></linearGradient>
        <filter id="soft" filterUnits="userSpaceOnUse" x="200" y="73" width="1078" height="612"><feGaussianBlur stdDeviation="12"/></filter>
        <filter id="soft2" filterUnits="userSpaceOnUse" x="200" y="73" width="1078" height="612"><feGaussianBlur stdDeviation="7"/></filter>
        <clipPath id="cf"><path d="M373 352L520 264C550 274 574 297 590 317C600 330 616 346 633 360L833 523Q812 545 808 561L790 583 640 456 612 438 557 423 441 489C442 440 405 375 373 352z"/></clipPath>
        <clipPath id="cr"><path d="M520 264L695 156C730 152 790 260 781 286L700 338 885 499Q857 505 833 524L633 360C616 346 600 330 590 317C574 297 550 274 520 264z"/></clipPath>
      </defs>
      <path d="M450 300Q458 288 473 289l8 2-20 14z" fill="#444"/>
      <path d="M520 264L694 156Q703 152 710 156C745 183 788 255 782 286Q781 290 778 292L700 338 750 382 720 434 600 350 540 320z" fill="url(#rear)"/>
      <path d="M359 366Q360 355 368 352L520 264C550 274 574 297 590 317C600 330 616 346 633 360L710 422 690 498 640 456 557 423 441 489Q430 492 421 482z" fill="url(#front)"/>
      <path d="M582 308L640 320 700 338 885 499 808 561 790 583 640 456 600 430 545 395z" fill="url(#hand)" mask="url(#join)"/>
      <g clip-path="url(#cr)"><path d="M560 250l95-30 10 70 30 48 60 55-60 20-90-50-90-80z" fill="#6b6b6b" filter="url(#soft)"/><path d="M692 285l95-30-5 40-80 48z" fill="#222" opacity=".6" filter="url(#soft2)"/></g>
      <g clip-path="url(#cf)"><path d="M530 368L575 348 620 378 700 450 680 495 640 465 540 425z" fill="#292929" opacity=".9" filter="url(#soft)"/><path d="M440 377L520 330Q562 305 590 325" stroke="#a6a6a6" stroke-width="15" fill="none" opacity=".75" filter="url(#soft2)"/><path d="M600 338L640 374 730 448" fill="none" stroke="#5c5c5c" stroke-width="12" opacity=".6" filter="url(#soft2)"/></g>
      <path d="M885 499L928 531Q936 538 934 547C930 575 885 640 858 637Q854 637 850 633L788 581 808 560Q815 515 885 499z" fill="url(#capg)"/>
      <path d="M932 537Q937 546 931 560C917 595 880 635 860 637Q852 637 850 625C847 590 845 583 858 570C876 550 905 536 923 534Q929 533 932 537z" fill="#202020"/>
      <path d="M856 572C876 550 905 536 926 534" fill="none" stroke="#5c5c5c"/>
      <path d="M520 264C550 274 574 297 590 317C600 330 616 346 633 360L833 523" fill="none" stroke="#2a2a2a" stroke-width=".7"/>
      <path d="M521 263C551 273 575 296 591 316C601 329 617 345 634 359L834 522" fill="none" stroke="#888" stroke-width=".5"/>
      <path d="M885 499Q857 503 833 524Q811 544 808 561" fill="none" stroke="#222" stroke-width=".7" stroke-dasharray="2 1"/>
      <path d="M710 156C745 183 788 255 782 286" fill="none" stroke="#1c1c1c" stroke-width="1.200"/>
      <path d="M359 366Q360 355 368 352C405 365 442 440 442 488Q431 492 421 482L378 367 365 378z" fill="#262626"/>
      <path d="M370 352C407 365 443 440 441 488" fill="none" stroke="#5a5a5a" stroke-width="1"/>
      <path d="M421 482q10-4 16-10l2 10q-8 6-18 0z" fill="#777"/><path d="M424 482q8 8 16 5l1-10q-6 8-17 5z" fill="#1f1f1f"/>
      <path d="M288 418L298 416 378 367C410 381 438 425 439 468L355 520 336 500z" fill="url(#chuck)"/>
      <g id="ribs" stroke-width=".9"></g>
      <path d="M288 418Q293 414 299 416C324 432 352 480 356 519Q352 522 346 520L317 510 288 468Q284 455 285 437z" fill="url(#cone)"/>
      <ellipse cx="305" cy="479" rx="12" ry="27" transform="rotate(-27 305 479)" fill="#161616"/>
      <ellipse cx="305" cy="479" rx="10" ry="25" transform="rotate(-27 305 479)" fill="#8e8c86"/>
      <ellipse cx="307" cy="481" rx="8" ry="20" transform="rotate(-27 307 481)" fill="#4b4a48"/>
      <path d="M310 490l6-5q2 6 0 9l-4 1z" fill="#eee"/>
      <path d="M285 484Q285 479 288 476L302 464Q313 474 317 487L297 495Q287 495 285 484z" fill="url(#bit)"/>
      <path d="M610 221C611 213 620 211 627 214C640 222 664 252 667 266C667 273 658 277 650 273C638 262 634 248 622 236C614 230 610 227 610 221z" fill="#454545" stroke="#333" stroke-width=".8"/>
      <path d="M613 221C614 215 621 214 626 216C639 225 661 254 664 266C664 271 658 274 652 271C641 261 636 247 624 234C617 229 613 226 613 221z" fill="#6a6a6a" stroke="#888" stroke-width=".6"/>
      <path d="M614.500 223q1-6 10-5l1 1-9 5zM618 227l9-6 3 3-9 6zM623.500 233l9-6 3 3-9 6zM628.500 239l9-6 3 4-9 5.500zM633 246l9-5.500 3 4-9 5.500zM638 253l9-6 3 4-9 6zM643 260.500l10-6 3 4-10 6zM648.500 268l11-6q5 7 0 9-5 2-9.500-1z" fill="#1c1c1c"/>
      <path d="M550 351Q551 346 556 343L570 335Q577 331 580 338 580 346 577 351L565 362Q559 367 554 361z" fill="#252525"/>
      <path d="M551 350Q552 346 557 343L571 335Q577 333 578 338 577 343 571 346L560 352Q552 356 551 350z" fill="#5e5e5e" stroke="#7c7c7c" stroke-width=".5"/>
      <path d="M539 426C534 415 545 403 563 395 575 389 586 390 594 397L638 433Q645 440 643 451L622 462Q617 464 612 460L570 424Q566 430 560 425L554 423Q548 420 539 426z" fill="#242424"/>
      <path d="M541 412C546 402 570 388 583 392 588 392 590 394 594 397L637 432 616 442 613 447 577 418C570 406 558 400 541 412z" fill="#5b5b5b"/>
      <path d="M616 442L637 432Q644 440 643 451L622 462Q616 464 612 459 612 450 616 442z" fill="url(#trg)"/>
      <g stroke-width="2" fill="none"><path d="M219 656L213 648" stroke="#063"/><path d="M219 656v-7" stroke="#c22"/><path d="M219 656l-10 6" stroke="#22b"/></g>
      <path d="M211 645l5 2-4 4z" fill="#063"/><path d="M216 652l3-5 3 5z" fill="#c22"/><path d="M207 663l3-5 3 5z" fill="#22b"/><path d="M216 656h4v3z" fill="#410"/>
      <g font-family="Noto Sans" font-size="6"><text x="208" y="646" fill="#396">Y</text><text x="217" y="648" fill="#c55">X</text><text x="203" y="667" fill="#33a">Z</text></g>
    </svg>
    <div class="knob">°</div>
    <div class="hud d-flex align-items-center" id="hud"></div>
    <div class="docctl d-flex text-secondary" id="docctl"></div>
    <div class="taskpane" id="task"></div>

    <div class="orient" role="dialog" aria-label="Orientation">
      <div class="head d-flex align-items-center justify-content-between ps-1"><span>Orientation</span><button aria-label="Close">×</button></div>
      <div class="tools d-flex align-items-center" id="otools"></div>
      <div class="faces" id="faces"></div>
      <div class="saved d-flex align-items-center"><svg class="ico me-1"><use href="#world"/></svg><span class="flex-fill">Saved Views</span><span class="pe-1">▸</span></div>
      <div class="ports d-flex align-items-center" id="vports"></div>
    </div>
  </section>
</main>

<footer>
  <div class="bottom">
    <div class="sheets d-flex">
      <div style="width:14px"></div><button class="nav-sheet">|◂</button><button class="nav-sheet">◂</button><button class="nav-sheet">▸</button><button class="nav-sheet">▸|</button>
      <button class="fw-bold" style="width:28px">Model</button><button style="width:55px;background:#d8d8d8">Motion Study 1</button>
    </div>
    <div class="filters d-flex align-items-center" id="filters"></div>
  </div>
  <div class="status d-flex"><span class="flex-fill">SOLIDWORKS 2017 x64 Edition</span><span class="border-start border-end px-1">Editing Part</span><span class="text-end" style="width:44px">MMGS</span><span class="text-center" style="width:22px">▴</span><span style="width:16px"></span><svg class="ico sm"><use href="#gear"/></svg></div>
</footer>

<script src="https://cdn.jsdelivr.net/npm/bootstrap@5.3.0/dist/js/bootstrap.bundle.min.js"></script>
<script>
const $ = id => document.getElementById(id);
const ico = (n, c = '') => `<svg class="ico ${c}" aria-hidden="true"><use href="#${n}"/></svg>`;
const btn = (n, c = '', i = '') => `<button class="cell ${c}" aria-label="${n}">${ico(n, i)}</button>`;
const dot = '<span class="caret-dot">·</span>';
const gap = '<span class="gap-s"></span>';
const grip = '<span class="grip gap-s"></span>';
const group = (names, w) => `<div class="d-flex" style="width:${w}px">${names.split(' ').map(n => n[0] === '-' ? btn(n.slice(1), 'flex-fill faint') : btn(n, 'flex-fill')).join('')}</div>`;

$('quick').innerHTML = ['new', 'open', 'save', 'print', 'undo'].map(n => `<div class="cell flex-fill">${btn(n)}${dot}</div>`).join('');
$('quick2').innerHTML = btn('light') + btn('gear') + dot + btn('list', 'faint gap-s') + btn('list', 'gap-s');
$('winctl').innerHTML = `<button class="cell fw-bold" style="width:10px;font-size:8px">?</button>${dot}${gap}${btn('min')}${btn('rest')}${btn('x')}`;

$('macros').innerHTML = '<span class="grip"></span>' + gap + group('play stop rec script macro run', 81)
  + '<div class="vline gap-s"></div>' + grip + grip + gap
  + group('spell measure scale section sensor perf chk geom sigma dev sym thick comp -share', 189) + dot + gap + btn('xls')
  + grip + grip + gap + group('simx flox dfmx drvx sust', 68) + '<div class="vline"></div>';

const big = (i, t, w) => `<button class="big" style="width:${w}px">${ico(i)}<span>${t}</span></button>`;
const rows = (list, w) => `<div class="rows" style="width:${w}px">${list.map(r => `<button class="${r[2] || ''}">${ico(r[0])}${r[1]}</button>`).join('')}</div>`;
$('ribbon').innerHTML =
  `<button class="big" style="width:25px;padding-top:2px">${ico('study')}<span>Design<br>Study</span><span style="line-height:12px">▾</span></button><div class="vline"></div>`
  + big('measure', 'Measure', 27) + big('scale', 'Mass<br>Properties', 30) + big('section', 'Section<br>Properties', 32) + big('sensor', 'Sensor', 22)
  + big('perf', '<br>Performance<br>Evaluation', 37)
  + rows([['chk', 'Check'], ['geom', 'Geometry Analysis'], ['geom', 'Import Diagnostics', 'faint']], 67) + '<div class="vline"></div><span style="width:2px"></span>'
  + rows([['dev', 'Deviation Analysis'], ['zebra', 'Zebra Stripes'], ['curv', 'Curvature']], 65)
  + rows([['draft', 'Draft Analysis'], ['under', 'Undercut Analysis'], ['partl', 'Parting Line Analysis']], 72)
  + rows([['sym', 'Symmetry Check'], ['thick', 'Thickness Analysis'], ['comp', 'Compare Documents']], 72) + '<div class="vline"></div><span style="width:6px"></span>'
  + big('simx', 'SimulationXpress<br>Analysis Wizard', 50) + big('flox', 'FloXpress<br>Analysis<br>Wizard', 29) + big('dfmx', 'DFMXpress<br>Analysis<br>Wizard', 34)
  + big('drvx', 'DriveWorksXpress<br>Wizard', 51) + big('sust', 'SustainabilityXpress', 56);

$('strip').innerHTML = [0, 1, 2, 3, 4, 5, 6, 7].map(i => `<li>${btn(i === 7 ? 'dev' : 'note', i === 2 ? '' : 'faint', 'sm')}</li>`).join('');
$('fmtabs').innerHTML = ['part', 'list', 'conf', 'targ', 'ball'].map((n, i) => btn(n, i ? '' : 'on', 'sm')).join('');
$('dhead').innerHTML = ['hid', 'cube', 'ball', 'eye'].map(n => `<div class="cell border-0">${ico(n, 'sm')}</div>`).join('');

const fil = n => ['fillet', 'Fillet' + n];
const tree = [['extr', 'Surface-Extrude6'], fil(19), ['scut', 'SurfaceCut3'], ['delf', 'DeleteFace2'], ['sk', 'Sketch47', 1], ['extr', 'Surface-Extrude7'],
  ['loft', 'Surface-Loft3'], ['knit', 'Surface-Knit23'], ['fill', 'Surface-Fill1'], ['fill', 'Surface-Fill2'], ['knit', 'Surface-Knit24'], ['surfp', 'Surface-Plane5'],
  ['knit', 'Surface-Knit25'], ['thk', 'Thicken2'], ['split', 'Split3'], ['plane', 'Plane12', 1], ['skb', 'Sketch48', 1], ['cute', 'Cut-Extrude5'], ['sk', 'Sketch49', 1],
  ['boss', 'Boss-Extrude3'], ['sk', '(-) Sketch52', 1], ['cute', 'Cut-Extrude7'], ['sk', 'Sketch53', 1], ['rev', 'Surface-Revolve2'], ['scut', 'SurfaceCut5'],
  ['sk', 'Sketch54', 1], ['boss', 'Boss-Extrude4'], ['offs', 'Surface-Offset4'], ['scut', 'SurfaceCut6'],
  ...[21, 1, 2, 3, 4, 5, 6, 7, 8, 9, 10, 12, 13, 14, 15, 16, 20, 22, 23, 24].map(fil), ['mirr', 'Mirror1']];
$('tree').innerHTML = tree.map(r => `<li>${ico(r[0], 'sm')}${r[1]}</li>`).join('');
$('marks').innerHTML = tree.map(r => `<li>${r[2] ? ico(r[0], 'sm') : ''}</li>`).join('');

$('hud').innerHTML = group('zfit zarea orig secv cubev', 66) + dot + gap + btn('cubew') + dot + gap
  + `<div class="pressed d-flex align-items-center align-self-stretch">${btn('eye')}${dot}</div>` + btn('ball') + btn('scn') + dot + gap + btn('mon') + dot;
$('docctl').innerHTML = ['dock', 'dock', 'min', 'rest', 'x'].map(n => btn(n)).join('');
$('task').innerHTML = ['home', 'books', 'fold', 'pal', 'ball', 'list', 'chat'].map(n => btn(n, n === 'ball' ? 'on' : '', 'sm')).join('');

$('otools').innerHTML = group('orig orign orig orig', 56) + '<div class="flex-fill"></div>' + btn('cubew', 'me-1') + btn('pin');
const face = d => `<svg class="ico" style="margin:auto" viewBox="0 0 12 12"><path d="${d}" fill="#3f8fb8"/><use href="#wire" width="12" height="12"/></svg>`;
$('faces').innerHTML = `<i></i>${face('M1.500 4l3-2.500h6L7.500 4z')}<i></i><i></i><span class="d-flex justify-content-end">${ico('cube')}</span><span class="text-center">▾</span>`
  + [`M1.500 4l3-2.500V8l-3 2.500z`, 'M1.500 4h6v6.500h-6z', 'M7.500 4l3-2.500V8l-3 2.500z', 'M4.500 1.500h6V8h-6z'].map(face).join('') + '<i></i><i></i>'
  + `<i></i>${face('M1.500 10.500l3-2.500h6l-3 2.500z')}<i></i><i></i><i></i>${ico('norm')}`;
const vp = d => `<svg class="ico" viewBox="0 0 12 12"><use href="#v1" width="12" height="12"/><path d="${d}" stroke="#555"/></svg>`;
$('vports').innerHTML = ['M0 0', 'M2 6.500h8', 'M6 2v8', 'M6 2v8M2 6.500h8'].map(vp).join('') + `<span class="ms-auto faint">${ico('knit', 'sm')}</span>`;

const tog = (l, w) => `<div class="toggles" style="width:${w}px">${l.split(' ').map(n => btn(n, '', 'sm')).join('')}</div>`;
$('filters').innerHTML = '<span class="grip"></span>' + gap + group('-fun2 -fun2 fun3', 41) + btn('cursor', 'pressed') + dot
  + btn('cursor', 'faint ms-1') + '<div class="vline gap-s me-1"></div>' + tog('pt vl sf fill cube ln surfp pt sk conf', 134)
  + btn('ln', 'faint') + tog('rev conf fill ck box glass note dev dev under books geom dt sf sf', 203) + '<div class="vline ms-1"></div>';

/* Grip ribs run from the front edge of the chuck to its rear edge. */
const bez = (p, t) => [0, 1].map(k => (1-t)**3*p[0][k] + 3*(1-t)**2*t*p[1][k] + 3*(1-t)*t*t*p[2][k] + t**3*p[3][k]);
const a = [[299, 416], [324, 432], [352, 480], [356, 519]], b = [[378, 367], [408, 381], [438, 425], [439, 468]];
let ribs = '';
for (let i = 1; i < 44; i++) {
  const t = i / 44, p = bez(a, t), q = bez(b, t);
  ribs += `<line x1="${p[0]}" y1="${p[1]}" x2="${q[0]}" y2="${q[1]}" stroke="${t < .5 ? '#222' : '#8a8a8a'}" opacity="${t > .3 && t < .62 ? .35 : .8}"/>`;
}
$('ribs').innerHTML = ribs;
</script>
</body>
</html>
